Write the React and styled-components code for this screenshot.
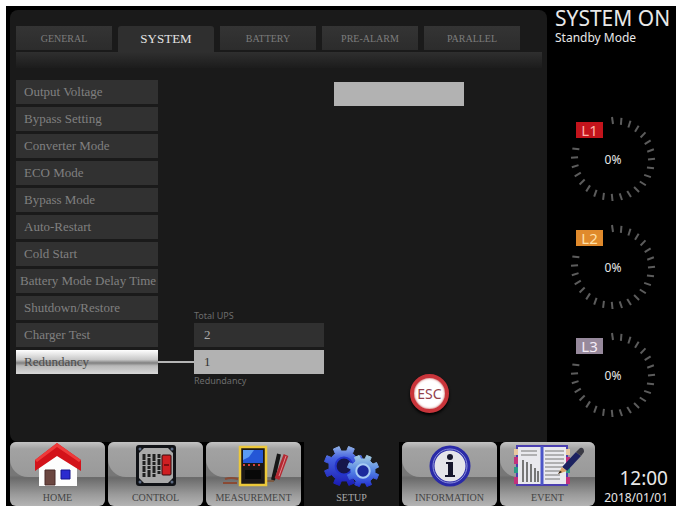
import { useState } from "react";
import styled, { createGlobalStyle, css } from "styled-components";

const GlobalStyle = createGlobalStyle`
  * {
    box-sizing: border-box;
  }

  body {
    margin: 0;
    background: #fff;
    font-family: "Liberation Serif", serif;
  }

  button,
  input {
    font-family: inherit;
    border: 0;
    margin: 0;
    padding: 0;
  }
`;

const Page = styled.div`
  min-height: 100vh;
  padding: 6px 6px 0;
  display: flex;
`;

const Screen = styled.div`
  flex: 1;
  min-width: 0;
  display: flex;
  flex-direction: column;
  padding: 4px 0 0 4px;
  background: #000;
`;

const Top = styled.div`
  flex: 1;
  display: flex;
`;

const Bottom = styled.div`
  display: flex;
`;

const Panel = styled.main`
  flex: 1;
  min-width: 0;
  padding: 16px 5px 0 6px;
  border-radius: 8px 8px 0 8px;
  background: #1a1a1a;
`;

const Tabs = styled.div`
  display: flex;
  gap: 6px;
  padding-right: 22px;
`;

const Tab = styled.button`
  flex: 1;
  height: 24px;
  margin-bottom: 2px;
  background: linear-gradient(#343434, #2c2c2c);
  color: #7c7c7c;
  font-size: 10px;
  cursor: pointer;

  ${({ $active }) =>
    $active &&
    css`
      height: 26px;
      margin-bottom: 0;
      border-radius: 3px 3px 0 0;
      background: #2f2f2f;
      color: #e4e4e4;
      font-size: 13px;
    `}
`;

const Strip = styled.div`
  height: 16px;
  background: linear-gradient(#2f2f2f, #1c1c1c);
`;

const Content = styled.div`
  display: flex;
  margin-top: 12px;
  padding-bottom: 26px;
`;

const Menu = styled.nav`
  width: 142px;
  display: flex;
  flex-direction: column;
  gap: 3px;
  padding-bottom: 39px;
`;

const MenuItem = styled.button`
  height: 24px;
  padding: 0 8px;
  background: #313131;
  color: #808080;
  font-size: 13px;
  text-align: left;
  white-space: nowrap;
  cursor: pointer;

  ${({ $wide }) =>
    $wide &&
    css`
      padding: 0 4px;
    `}

  ${({ $active }) =>
    $active &&
    css`
      background: linear-gradient(
        #fff 0%,
        #c8c8c8 40%,
        #808080 54%,
        #b8b8b8 66%,
        #d8d8d8 100%
      );
      color: #4c4c4c;
    `}
`;

const Settings = styled.div`
  flex: 1;
  display: flex;
  flex-direction: column;
  justify-content: space-between;
  padding-top: 2px;
`;

const Field = styled.input`
  width: 130px;
  height: 24px;
  padding: 0 10px;
  font-size: 13px;
  background: ${({ $dark }) => ($dark ? "#303030" : "#b2b2b2")};
  color: ${({ $dark }) => ($dark ? "#aaa" : "#333")};
`;

const VoltageField = styled(Field)`
  margin-left: 176px;
`;

const SettingsRow = styled.div`
  display: flex;
  align-items: flex-end;
  gap: 86px;
`;

const Group = styled.div`
  display: flex;
  flex-direction: column;
  gap: 3px;
  padding-bottom: 25px;
`;

const FieldRow = styled.div`
  display: flex;
  flex-direction: column;
  padding-left: 36px;
`;

const Caption = styled.label`
  color: #6c6c6c;
  font-family: "Noto Sans", sans-serif;
  font-size: 9px;
  line-height: 14px;
`;

const Linked = styled.div`
  display: flex;
  align-items: center;
  margin-left: -36px;
`;

const Connector = styled.span`
  width: 36px;
  height: 2px;
  background: #b5b5b5;
`;

const EscButton = styled.button`
  width: 39px;
  height: 39px;
  border: 4px solid #c9343a;
  border-radius: 50%;
  background: radial-gradient(#fff 55%, #f6d5d2);
  box-shadow: inset 0 0 2px #a33, 0 2px 3px #000;
  color: #93404a;
  font: 14px "Noto Sans", sans-serif;
  cursor: pointer;
`;

const NavBar = styled.nav`
  flex: 1;
  min-width: 0;
  display: flex;
  gap: 3px;
`;

const NavLabel = styled.span`
  font-size: 10px;
  line-height: 12px;
`;

const NavButton = styled.button`
  position: relative;
  flex: 1;
  min-width: 0;
  height: 64px;
  padding: 1px 0 2px;
  display: flex;
  flex-direction: column;
  align-items: center;
  justify-content: space-between;
  border-radius: 6px;
  background: linear-gradient(
    #777 0%,
    #777 52%,
    #6a6a6a 56%,
    #9a9a9a 82%,
    #b4b4b4 100%
  );
  color: #444;
  cursor: pointer;

  &::before {
    content: "";
    position: absolute;
    inset: 0 0 29px;
    border-radius: 6px 6px 0 18px;
    background: linear-gradient(#c4c4c4, #a2a2a2 20%, #999);
  }

  svg,
  ${NavLabel} {
    position: relative;
  }

  ${({ $active }) =>
    $active &&
    css`
      border-radius: 0;
      background: #1a1a1a;
      color: #aaa;

      &::before {
        display: none;
      }
    `}
`;

const Aside = styled.aside`
  width: 129px;
  display: flex;
  flex-direction: column;
  padding: 0 6px 0 8px;
  color: #e8e8e8;
  font-family: "Noto Sans", sans-serif;
`;

const Status = styled.h1`
  margin: -4px 0 0;
  font-size: 21px;
  font-weight: 400;
  line-height: 24px;
  white-space: nowrap;
`;

const Mode = styled.p`
  margin: 0;
  font-size: 12px;
  line-height: 16px;
`;

const Gauges = styled.div`
  display: flex;
  flex-direction: column;
  gap: 18px;
  padding-left: 13px;
  margin-top: 68px;
`;

const GaugeBox = styled.div`
  position: relative;
  width: 90px;
  height: 90px;
  display: flex;
  align-items: center;
  justify-content: center;
  font-size: 12px;

  svg {
    position: absolute;
    inset: 0;
  }
`;

const Badge = styled.span`
  position: absolute;
  left: 8px;
  top: 8px;
  width: 27px;
  height: 16px;
  background: ${({ $color }) => $color};
  color: ${({ $ink }) => $ink};
  font-size: 15px;
  line-height: 16px;
  text-align: center;
`;

const Clock = styled.div`
  width: 81px;
  padding: 24px 8px 0 0;
  color: #e8e8e8;
  font-family: "Noto Sans", sans-serif;
  font-size: 12px;
  line-height: 16px;
  text-align: right;
`;

const Time = styled.div`
  font-size: 19px;
  line-height: 24px;
`;

const HomeIcon = () => (
  <svg width="46" height="44" viewBox="0 0 46 44">
    <path d="M4 20 23 7l19 13v23H4z" fill="#fdfdfd" />
    <path d="M22 0 0 17v11l22-15 24 15V17z" fill="#d3121a" />
    <path d="M22 0 0 17l2 2L22 4l22 15 2-2z" fill="#ee3a3a" />
    <path d="M10 27h10v15H10z" fill="#6b4640" stroke="#4b2b28" />
    <path d="M26 27h9v9h-9z" fill="#2b2bd0" stroke="#14148c" />
  </svg>
);

const ControlIcon = () => (
  <svg width="42" height="44" viewBox="0 0 42 44">
    <rect x="1" y="2" width="40" height="41" rx="3" fill="#101216" />
    <path d="M9 5h24l5 5v25l-5 5H9l-5-5V10z" fill="#a9a9a9" />
    <g stroke="#1f1f1f" strokeWidth="3" fill="none">
      <path d="M9 11v23" strokeDasharray="6 1 4 1" />
      <path d="M14 11v23" strokeDasharray="3 1 7 1" />
      <path d="M19 11v23" strokeDasharray="7 1 3 1" />
      <path d="M24 11v20" strokeDasharray="4 1 6 1" />
    </g>
    <rect x="27" y="12" width="9" height="20" rx="1" fill="#cf1f22" stroke="#35090a" />
    <path d="M29 22h5" stroke="#7d0d10" strokeWidth="2" />
    <g fill="#5e6c84">
      <circle cx="5" cy="6" r="1.500" />
      <circle cx="37" cy="6" r="1.500" />
      <circle cx="5" cy="39" r="1.500" />
      <circle cx="37" cy="39" r="1.500" />
    </g>
  </svg>
);

const MeasureIcon = () => (
  <svg width="70" height="44" viewBox="0 0 70 44">
    <path d="M6 36q6-2 13 0M4 40h14" fill="none" stroke="#8a4a34" strokeWidth="2" />
    <path d="M46 38h9" stroke="#7c5a42" strokeWidth="2" />
    <rect x="21" y="4" width="26" height="38" fill="#1b1717" stroke="#ecc83a" strokeWidth="2.500" />
    <rect x="24" y="7" width="20" height="13" fill="#2457d6" />
    <path d="M24 7h11l-5 7-6 3z" fill="#5a9bf2" />
    <path d="M24 22h20" stroke="#d2423c" strokeWidth="2" strokeDasharray="2 3" />
    <rect x="26" y="27" width="16" height="9" fill="#080808" />
    <path d="m54 37 6-26" stroke="#161616" strokeWidth="4" />
    <path d="m58 36 9-24" stroke="#b32831" strokeWidth="5" />
    <path d="m60 33 7-20" stroke="#e08a90" strokeWidth="1" />
  </svg>
);

// Outline of a toothed wheel around 0,0
const gearPath = (r) => {
  const points = [];
  for (let i = 0; i < 8; i++) {
    [
      [-12, 0.76],
      [-9, 1],
      [9, 1],
      [12, 0.76],
    ].forEach(([offset, size]) => {
      const a = ((i * 45 + 22 + offset) * Math.PI) / 180;
      points.push(`${Math.sin(a) * r * size} ${-Math.cos(a) * r * size}`);
    });
  }
  return `M${points.join("L")}Z`;
};

const Gear = ({ x, y, r, fill, rim, hole }) => (
  <g transform={`translate(${x} ${y})`}>
    <path d={gearPath(r)} fill={fill} strokeLinejoin="round" stroke={fill} />
    <circle r={r * 0.42} fill={hole} stroke={rim} strokeWidth="2" />
  </g>
);

const SetupIcon = () => (
  <svg width="56" height="44" viewBox="0 0 56 44">
    <defs>
      <linearGradient id="gearA" x1="0" y1="0" x2="0" y2="1">
        <stop offset="0" stopColor="#8fb0e6" />
        <stop offset="0.300" stopColor="#4460e0" />
        <stop offset="1" stopColor="#1a1cb4" />
      </linearGradient>
      <linearGradient id="gearB" x1="0" y1="0" x2="0" y2="1">
        <stop offset="0" stopColor="#a4cce0" />
        <stop offset="0.500" stopColor="#5484e6" />
        <stop offset="1" stopColor="#2230d0" />
      </linearGradient>
    </defs>
    <Gear x={20} y={23} r={20} fill="url(#gearA)" rim="#2434cc" hole="#16164a" />
    <Gear x={39} y={28} r={16} fill="url(#gearB)" rim="#a8ccf4" hole="#1c2a9c" />
  </svg>
);

const InfoIcon = () => (
  <svg width="44" height="44" viewBox="0 0 44 44">
    <circle cx="22" cy="23" r="18" fill="#e4e4ea" stroke="#2a2aa8" strokeWidth="5" />
    <circle cx="22" cy="23" r="17" fill="none" stroke="#8f94dc" strokeWidth="1" />
    <circle cx="22" cy="14" r="3" fill="#15152c" />
    <path d="M18 19h7v13h2v2H17v-2h3V21h-2z" fill="#15152c" />
  </svg>
);

const EventIcon = () => (
  <svg width="74" height="44" viewBox="0 0 74 44">
    <path d="M6 3h50v39H6z" fill="#e9e9ee" stroke="#4b3fb0" strokeWidth="2" />
    <g strokeWidth="4">
      <path d="M5 6v6M57 6v6" stroke="#e8c9a0" />
      <path d="M5 14v7M57 14v7" stroke="#c2317c" />
      <path d="M5 24v6M57 24v6" stroke="#2c9a86" />
      <path d="M5 34v7M57 34v7" stroke="#c2317c" />
    </g>
    <path d="M31 3v39" stroke="#4b55c8" strokeWidth="3" />
    <g stroke="#777">
      <path d="M10 8h16M10 12h16M34 8h19M34 12h19M34 16h19M34 20h19M34 24h17M34 28h16M34 32h15M34 36h15" />
      <path d="M12 17v22M16 19v20M20 21v18M24 25v14M27 28v11" strokeWidth="2" />
    </g>
    <path d="m51 24 14-15 5 4-14 15z" fill="#1c2260" />
    <path d="m65 9 4-4q4-1 4 4l-3 4z" fill="#3a3a44" />
    <path d="m47 31 4-7 5 4z" fill="#d9a46a" />
    <path d="m47 31 2-3 2 1z" fill="#111" />
  </svg>
);

const tabs = ["GENERAL", "SYSTEM", "BATTERY", "PRE-ALARM", "PARALLEL"];

const menu = [
  "Output Voltage",
  "Bypass Setting",
  "Converter Mode",
  "ECO Mode",
  "Bypass Mode",
  "Auto-Restart",
  "Cold Start",
  "Battery Mode Delay Time",
  "Shutdown/Restore",
  "Charger Test",
  "Redundancy",
];

const navItems = [
  { label: "HOME", Icon: HomeIcon },
  { label: "CONTROL", Icon: ControlIcon },
  { label: "MEASUREMENT", Icon: MeasureIcon },
  { label: "SETUP", Icon: SetupIcon },
  { label: "INFORMATION", Icon: InfoIcon },
  { label: "EVENT", Icon: EventIcon },
];

const phases = [
  { name: "L1", color: "#c3141c", ink: "#ffb0a8" },
  { name: "L2", color: "#e08a2c", ink: "#ffe0a8" },
  { name: "L3", color: "#97899c", ink: "#f4ecf6" },
];

const ticks = Array.from({ length: 23 }, (_, i) => i * 13);

const Gauge = ({ name, color, ink }) => (
  <GaugeBox>
    <svg viewBox="0 0 90 90">
      {ticks.map((a) => (
        <path
          key={a}
          d="M44 3l1 7"
          stroke="#5c5c5c"
          strokeWidth="2"
          transform={`rotate(${a} 45 45)`}
        />
      ))}
    </svg>
    <Badge $color={color} $ink={ink}>
      {name}
    </Badge>
    0%
  </GaugeBox>
);

const App = () => {
  const [tab, setTab] = useState("SYSTEM");
  const [item, setItem] = useState("Redundancy");
  const [page, setPage] = useState("SETUP");
  const [voltage, setVoltage] = useState("");
  const [redundancy, setRedundancy] = useState("1");

  return (
    <Page>
      <GlobalStyle />
      <Screen>
        <Top>
          <Panel>
            <Tabs>
              {tabs.map((name) => (
                <Tab key={name} $active={name === tab} onClick={() => setTab(name)}>
                  {name}
                </Tab>
              ))}
            </Tabs>
            <Strip />
            <Content>
              <Menu>
                {menu.map((name) => (
                  <MenuItem
                    key={name}
                    $active={name === item}
                    $wide={name.length > 20}
                    onClick={() => setItem(name)}
                  >
                    {name}
                  </MenuItem>
                ))}
              </Menu>
              <Settings>
                <VoltageField
                  aria-label="Output Voltage"
                  value={voltage}
                  onChange={(e) => setVoltage(e.target.value)}
                />
                <SettingsRow>
                  <Group>
                    <FieldRow>
                      <Caption htmlFor="total">Total UPS</Caption>
                      <Field id="total" $dark value="2" readOnly />
                    </FieldRow>
                    <FieldRow>
                      <Linked>
                        <Connector />
                        <Field
                          id="redundancy"
                          value={redundancy}
                          onChange={(e) => setRedundancy(e.target.value)}
                        />
                      </Linked>
                      <Caption htmlFor="redundancy">Redundancy</Caption>
                    </FieldRow>
                  </Group>
                  <EscButton>ESC</EscButton>
                </SettingsRow>
              </Settings>
            </Content>
          </Panel>
          <Aside>
            <Status>SYSTEM ON</Status>
            <Mode>Standby Mode</Mode>
            <Gauges>
              {phases.map((phase) => (
                <Gauge key={phase.name} {...phase} />
              ))}
            </Gauges>
          </Aside>
        </Top>
        <Bottom>
          <NavBar>
            {navItems.map(({ label, Icon }) => (
              <NavButton key={label} $active={label === page} onClick={() => setPage(label)}>
                <Icon />
                <NavLabel>{label}</NavLabel>
              </NavButton>
            ))}
          </NavBar>
          <Clock>
            <Time>12:00</Time>
            2018/01/01
          </Clock>
        </Bottom>
      </Screen>
    </Page>
  );
};

export default App;
